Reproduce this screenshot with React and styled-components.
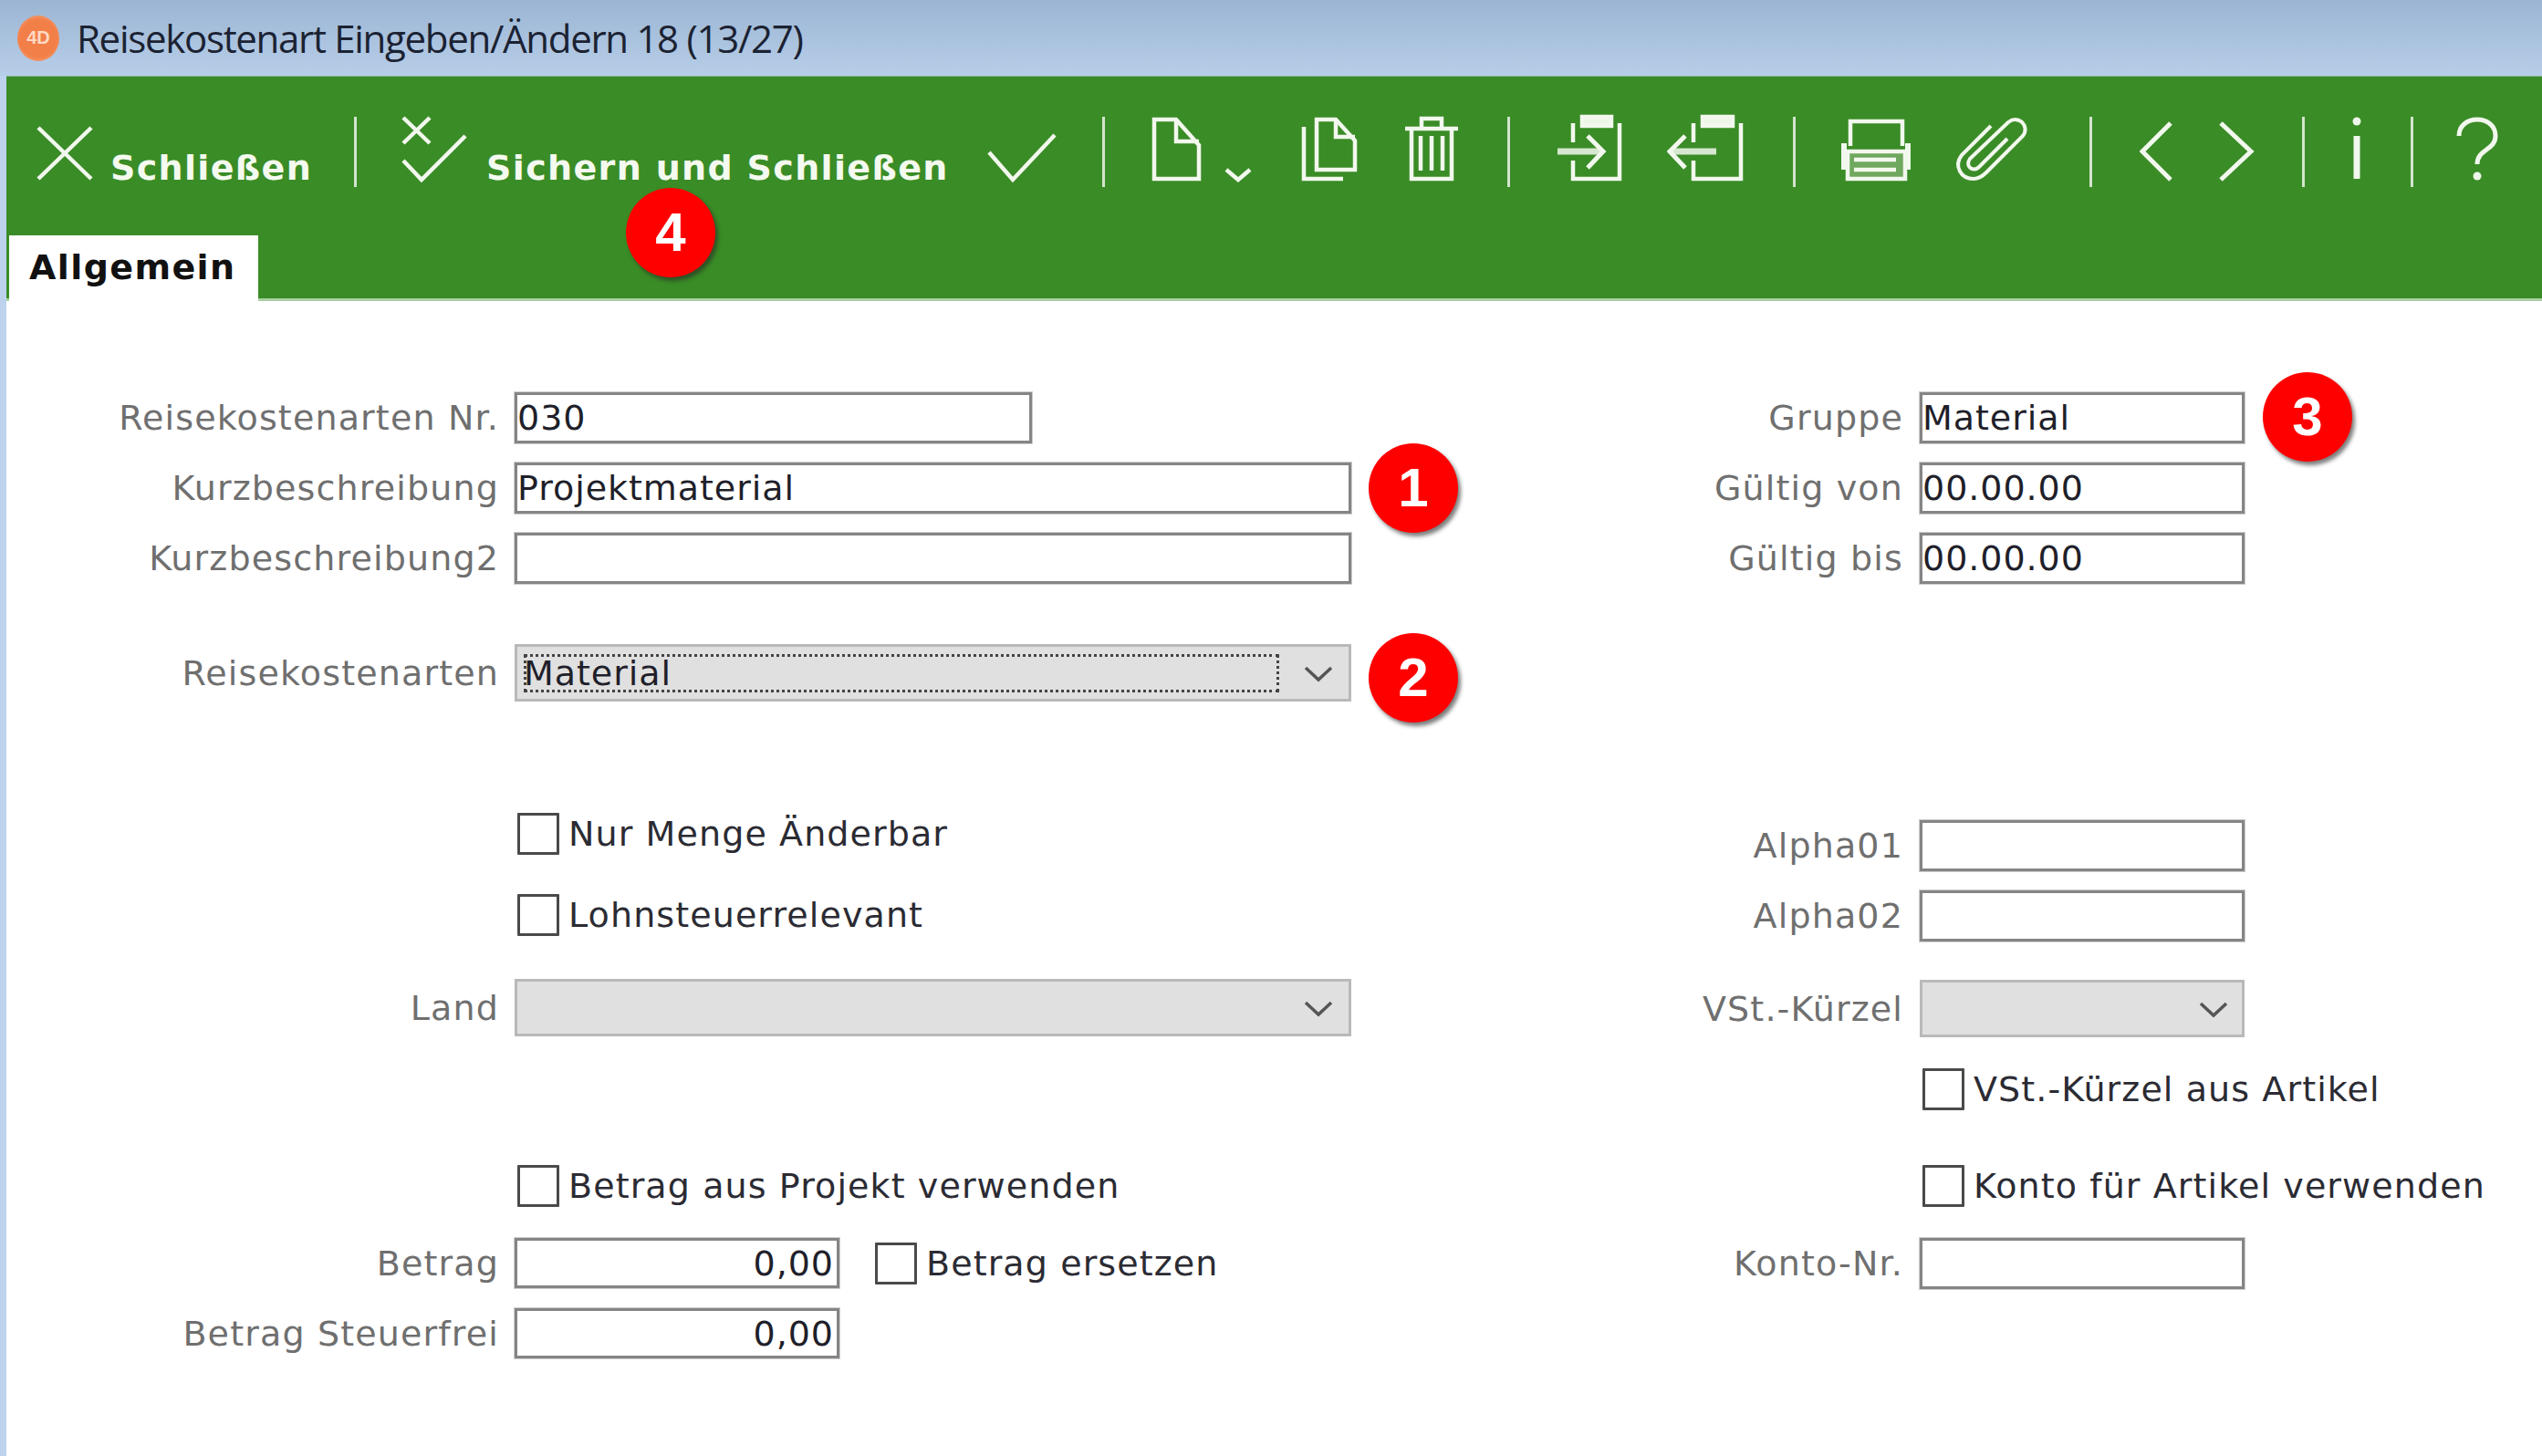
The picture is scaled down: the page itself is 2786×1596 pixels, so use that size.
import React from 'react';
import styled, { createGlobalStyle } from 'styled-components';

const GlobalStyle = createGlobalStyle`
  html, body {
    margin: 0;
    padding: 0;
    background: #ffffff;
  }
`;

const Page = styled.div`
  width: 2786px;
  height: 1596px;
  position: relative;
  overflow: hidden;
  background: #ffffff;
  display: flex;
  flex-direction: column;
  font-family: 'DejaVu Sans', Verdana, sans-serif;
`;

const TitleBar = styled.div`
  height: 83px;
  padding-left: 19px;
  display: flex;
  align-items: center;
  gap: 19px;
  background: linear-gradient(180deg, #9bb5d3 0%, #b7cee8 100%);
`;

const AppBadge = styled.div`
  width: 46px;
  height: 50px;
  border-radius: 50%;
  background: radial-gradient(circle, #f27f48 0%, #f27f48 60%, #f9b596 100%);
  color: #ffd9c4;
  font: 700 20px 'Liberation Sans', sans-serif;
  display: flex;
  align-items: center;
  justify-content: center;
`;

const TitleText = styled.div`
  font: 400 42px 'Open Sans', sans-serif;
  letter-spacing: -1.3px;
  color: #1b2232;
`;

const Body = styled.div`
  flex: 1;
  display: flex;
  flex-direction: column;
  border-left: 7px solid #bdd3ed;
`;

const Toolbar = styled.div`
  height: 247px;
  display: flex;
  flex-direction: column;
  justify-content: space-between;
  background: #3a8c26;
  border-top: 1px solid #8db59b;
  border-bottom: 3px solid #a9cfa2;
  box-sizing: border-box;
`;

const ToolRow = styled.div`
  display: flex;
  align-items: flex-start;
  padding-top: 35px;
  height: 90px;
`;

const Separator = styled.div`
  width: 3px;
  height: 77px;
  margin-top: 9px;
  margin-left: ${(p) => p.$gap}px;
  background: #d3e5cd;
`;

const Glyph = styled.svg`
  flex: none;
  display: block;
  margin-left: ${(p) => p.$gap}px;
  fill: none;
  stroke: #f2f8ee;
  stroke-width: ${(p) => p.$stroke || 4.5}px;
  stroke-linejoin: miter;
`;

const ToolLabel = styled.div`
  margin-left: ${(p) => p.$gap}px;
  margin-top: 43px;
  font-size: 38px;
  line-height: 44px;
  font-weight: 700;
  letter-spacing: 1.35px;
  color: #f4faef;
  white-space: nowrap;
`;

const TabStrip = styled.div`
  display: flex;
  padding-left: 3px;
  margin-bottom: -3px;
`;

const Tab = styled.div`
  width: 273px;
  height: 72px;
  box-sizing: border-box;
  padding: 12px 0 0 22px;
  background: #ffffff;
  font-size: 38px;
  line-height: 46px;
  font-weight: 700;
  letter-spacing: 1.4px;
  color: #111111;
`;

const Form = styled.div`
  display: flex;
  padding-top: 100px;
`;

const LeftColumn = styled.div`
  width: 1473px;
`;

const RightColumn = styled.div`
  flex: 1;
`;

const Row = styled.div`
  display: grid;
  align-items: center;
  height: ${(p) => p.$h || 56}px;
  margin-top: ${(p) => p.$top || 0}px;
`;

const LeftRow = styled(Row)`
  grid-template-columns: 540px auto;
  column-gap: 16px;
`;

const RightRow = styled(Row)`
  grid-template-columns: 606px auto;
  column-gap: 17px;
`;

const FieldLabel = styled.label`
  text-align: right;
  font-size: 38px;
  letter-spacing: 1.15px;
  color: #6f6f6f;
  white-space: nowrap;
`;

const TextInput = styled.input`
  box-sizing: border-box;
  display: block;
  width: ${(p) => p.$w}px;
  height: 100%;
  margin: 0 0 0 1px;
  padding: 0 ${(p) => (p.$right ? 3 : 0)}px 0;
  border: 3px solid #858585;
  outline: 1px solid #cdcdcd;
  border-radius: 0;
  background: #ffffff;
  font-family: 'DejaVu Sans', Verdana, sans-serif;
  font-size: 38px;
  letter-spacing: 0.95px;
  color: #1f1f2a;
  text-align: ${(p) => (p.$right ? 'right' : 'left')};
`;

const Select = styled.div`
  box-sizing: border-box;
  width: ${(p) => p.$w}px;
  height: 100%;
  margin-left: 1px;
  padding-left: 7px;
  position: relative;
  display: flex;
  align-items: center;
  background: #e0e0e0;
  border: 3px solid #b9b9b9;
`;

const FocusBox = styled.div`
  box-sizing: border-box;
  width: 828px;
  height: 42px;
  display: flex;
  align-items: center;
  border: 3px dotted #444444;
  text-indent: -3px;
  font-size: 38px;
  letter-spacing: 0.95px;
  color: #1f1f2a;
`;

const SelectArrow = styled.svg`
  position: absolute;
  right: ${(p) => p.$right}px;
  top: 50%;
  width: 32px;
  height: 18px;
  margin-top: -8px;
  fill: none;
  stroke: #555555;
  stroke-width: 3.5px;
`;

const CheckRow = styled.div`
  display: flex;
  align-items: center;
  gap: 10px;
  padding-left: ${(p) => p.$indent || 0}px;
  height: 46px;
  margin-top: ${(p) => p.$top || 0}px;
  font-size: 38px;
  letter-spacing: 1.1px;
  color: #2b2b33;
  white-space: nowrap;
`;

const CheckBox = styled.input.attrs({ type: 'checkbox' })`
  appearance: none;
  flex: none;
  box-sizing: border-box;
  width: 46px;
  height: 46px;
  margin: 0;
  background: #ffffff;
  border: 3px solid #4a4a4a;
  border-radius: 1px;
`;

const InlineControls = styled.div`
  display: flex;
  align-items: center;
  height: 100%;
  gap: 39px;
`;

const NumberBadge = styled.div`
  position: absolute;
  left: ${(p) => p.$x}px;
  top: ${(p) => p.$y}px;
  width: 98px;
  height: 98px;
  border-radius: 50%;
  background: #ff0000;
  box-shadow: 3px 4px 4px rgba(40, 40, 40, 0.6);
  color: #ffffff;
  font: 700 60px/98px 'Liberation Sans', Arial, sans-serif;
  text-align: center;
`;

const icon = (x, w, y = 120, h = 90) => ({
  viewBox: `${x} ${y} ${w} ${h}`,
  width: w,
  height: h,
});

const CloseIcon = ({ gap }) => (
  <Glyph {...icon(36, 70)} $gap={gap - 7}>
    <path d="M42 141L100 197M100 141L42 197" />
  </Glyph>
);

const SaveCloseIcon = ({ gap }) => (
  <Glyph {...icon(440, 80)} $gap={gap}>
    <path d="M446 130L475 158M475 130L446 158" />
    <path d="M446 177L466 198L514 150" />
  </Glyph>
);

const CheckIcon = ({ gap }) => (
  <Glyph {...icon(1080, 80)} $gap={gap}>
    <path d="M1084 168L1110 198L1156 149" />
  </Glyph>
);

const DocIcon = ({ gap }) => (
  <Glyph {...icon(1260, 60)} $gap={gap}>
    <path d="M1266 132H1290L1315 160V197H1266Z" />
    <path d="M1290 132V156H1315" />
  </Glyph>
);

const DropIcon = ({ gap }) => (
  <Glyph {...icon(1340, 36)} $gap={gap}>
    <path d="M1345 187L1358 198L1371 187" />
  </Glyph>
);

const CopyIcon = ({ gap }) => (
  <Glyph {...icon(1425, 66)} $gap={gap}>
    <path d="M1444 132H1465L1486 155V187H1444Z" />
    <path d="M1465 132V151H1486" />
    <path d="M1430 140V197H1473" />
  </Glyph>
);

const TrashIcon = ({ gap }) => (
  <Glyph {...icon(1538, 64)} $gap={gap}>
    <path d="M1541 142H1599M1559 142V131H1581V142M1548 142V197H1592V142" />
    <path d="M1558 150V188M1570 150V188M1582 150V188" />
  </Glyph>
);

const ImportIcon = ({ gap }) => (
  <Glyph {...icon(1705, 76)} $gap={gap}>
    <path d="M1725 157V136M1776 136V197H1725V177M1767 136" />
    <rect x="1735" y="129" width="32" height="10" fill="#eef6ea" />
    <path d="M1708 167H1757" strokeWidth="7" stroke="#d6e7d0" />
    <path d="M1741 150L1758 167L1741 185" strokeWidth="5" />
  </Glyph>
);

const ExportIcon = ({ gap }) => (
  <Glyph {...icon(1828, 86)} $gap={gap}>
    <path d="M1857 157V136M1909 136V197H1857V177" />
    <rect x="1867" y="129" width="33" height="10" fill="#eef6ea" />
    <path d="M1832 167H1882" strokeWidth="7" stroke="#d6e7d0" />
    <path d="M1848 150L1831 167L1848 185" strokeWidth="5" />
  </Glyph>
);

const PrinterIcon = ({ gap }) => (
  <Glyph {...icon(2016, 82)} $gap={gap}>
    <path d="M2029 161V134H2086V161" />
    <path d="M2022 158V187M2092 158V187" strokeWidth="6" />
    <path d="M2026 167H2089V197H2026Z" fill="#6fa85e" />
    <path d="M2033 176H2079M2033 187H2079" />
  </Glyph>
);

const ClipIcon = ({ gap, d }) => (
  <Glyph {...icon(2140, 86)} $gap={gap} $stroke={4}>
    <path d={d} />
  </Glyph>
);

const ChevronIcon = ({ gap, d, x }) => (
  <Glyph {...icon(x, 40)} $gap={gap} $stroke={5}>
    <path d={d} />
  </Glyph>
);

const InfoIcon = ({ gap }) => (
  <Glyph {...icon(2570, 24)} $gap={gap}>
    <circle cx="2582" cy="134" r="4.5" fill="#eef6ea" stroke="none" />
    <path d="M2582 150V197" strokeWidth="7" />
  </Glyph>
);

const HelpIcon = ({ gap }) => (
  <Glyph {...icon(2688, 54)} $gap={gap} $stroke={5}>
    <path d="M2694 150C2694 126 2734 126 2734 150C2734 166 2714 164 2714 181" />
    <circle cx="2714" cy="194" r="4.5" fill="#eef6ea" stroke="none" />
  </Glyph>
);

const Arrow = ({ right = 17 }) => (
  <SelectArrow viewBox="0 0 32 18" $right={right}>
    <path d="M2 2L16 15L30 2" />
  </SelectArrow>
);

const App = () => (
  <Page>
    <GlobalStyle />
    <TitleBar>
      <AppBadge>4D</AppBadge>
      <TitleText>Reisekostenart Eingeben/Ändern 18 (13/27)</TitleText>
    </TitleBar>
    <Body>
      <Toolbar>
        <ToolRow>
          <CloseIcon gap={36} />
          <ToolLabel $gap={15}>Schließen</ToolLabel>
          <Separator $gap={46} />
          <SaveCloseIcon gap={45} />
          <ToolLabel $gap={17}>Sichern und Schließen</ToolLabel>
          <CheckIcon gap={40} />
          <Separator $gap={48} />
          <DocIcon gap={48} />
          <DropIcon gap={20} />
          <CopyIcon gap={49} />
          <TrashIcon gap={47} />
          <Separator $gap={51} />
          <ImportIcon gap={49} />
          <ExportIcon gap={47} />
          <Separator $gap={52} />
          <PrinterIcon gap={47} />
          <ClipIcon
            gap={42}
            d="M2183 139L2151 171C2142 183 2150 197 2164 197C2170 197 2174 194 2178 190L2218 150C2226 140 2214 126 2202 135L2160 175C2154 184 2164 190 2170 184L2201 153"
          />
          <Separator $gap={65} />
          <ChevronIcon gap={52} x={2346} d="M2380 136L2349 167L2380 198" />
          <ChevronIcon gap={47} x={2431} d="M2433 136L2466 167L2433 198" />
          <Separator $gap={51} />
          <InfoIcon gap={45} />
          <Separator $gap={47} />
          <HelpIcon gap={44} />
        </ToolRow>
        <TabStrip>
          <Tab>Allgemein</Tab>
        </TabStrip>
      </Toolbar>
      <Form>
        <LeftColumn>
          <LeftRow>
            <FieldLabel>Reisekostenarten Nr.</FieldLabel>
            <TextInput $w={567} defaultValue="030" readOnly />
          </LeftRow>
          <LeftRow $top={21}>
            <FieldLabel>Kurzbeschreibung</FieldLabel>
            <TextInput $w={917} defaultValue="Projektmaterial" readOnly />
          </LeftRow>
          <LeftRow $top={21}>
            <FieldLabel>Kurzbeschreibung2</FieldLabel>
            <TextInput $w={917} readOnly />
          </LeftRow>
          <LeftRow $top={66} $h={63}>
            <FieldLabel>Reisekostenarten</FieldLabel>
            <Select $w={917}>
              <FocusBox>Material</FocusBox>
              <Arrow />
            </Select>
          </LeftRow>
          <CheckRow $indent={560} $top={122}>
            <CheckBox readOnly />
            Nur Menge Änderbar
          </CheckRow>
          <CheckRow $indent={560} $top={43}>
            <CheckBox readOnly />
            Lohnsteuerrelevant
          </CheckRow>
          <LeftRow $top={47} $h={63}>
            <FieldLabel>Land</FieldLabel>
            <Select $w={917}>
              <Arrow />
            </Select>
          </LeftRow>
          <CheckRow $indent={560} $top={141}>
            <CheckBox readOnly />
            Betrag aus Projekt verwenden
          </CheckRow>
          <LeftRow $top={34} $h={55}>
            <FieldLabel>Betrag</FieldLabel>
            <InlineControls>
              <TextInput $w={356} $right defaultValue="0,00" readOnly />
              <CheckRow>
                <CheckBox readOnly />
                Betrag ersetzen
              </CheckRow>
            </InlineControls>
          </LeftRow>
          <LeftRow $top={22} $h={55}>
            <FieldLabel>Betrag Steuerfrei</FieldLabel>
            <TextInput $w={356} $right defaultValue="0,00" readOnly />
          </LeftRow>
        </LeftColumn>
        <RightColumn>
          <RightRow>
            <FieldLabel>Gruppe</FieldLabel>
            <TextInput $w={356} defaultValue="Material" readOnly />
          </RightRow>
          <RightRow $top={21}>
            <FieldLabel>Gültig von</FieldLabel>
            <TextInput $w={356} defaultValue="00.00.00" readOnly />
          </RightRow>
          <RightRow $top={21}>
            <FieldLabel>Gültig bis</FieldLabel>
            <TextInput $w={356} defaultValue="00.00.00" readOnly />
          </RightRow>
          <RightRow $top={259}>
            <FieldLabel>Alpha01</FieldLabel>
            <TextInput $w={356} readOnly />
          </RightRow>
          <RightRow $top={21}>
            <FieldLabel>Alpha02</FieldLabel>
            <TextInput $w={356} readOnly />
          </RightRow>
          <RightRow $top={42} $h={63}>
            <FieldLabel>VSt.-Kürzel</FieldLabel>
            <Select $w={356}>
              <Arrow right={15} />
            </Select>
          </RightRow>
          <CheckRow $indent={627} $top={34}>
            <CheckBox readOnly />
            VSt.-Kürzel aus Artikel
          </CheckRow>
          <CheckRow $indent={627} $top={60}>
            <CheckBox readOnly />
            Konto für Artikel verwenden
          </CheckRow>
          <RightRow $top={34}>
            <FieldLabel>Konto-Nr.</FieldLabel>
            <TextInput $w={356} readOnly />
          </RightRow>
        </RightColumn>
      </Form>
    </Body>
    <NumberBadge $x={686} $y={206}>4</NumberBadge>
    <NumberBadge $x={1500} $y={486}>1</NumberBadge>
    <NumberBadge $x={1500} $y={694}>2</NumberBadge>
    <NumberBadge $x={2480} $y={408}>3</NumberBadge>
  </Page>
);

export default App;
